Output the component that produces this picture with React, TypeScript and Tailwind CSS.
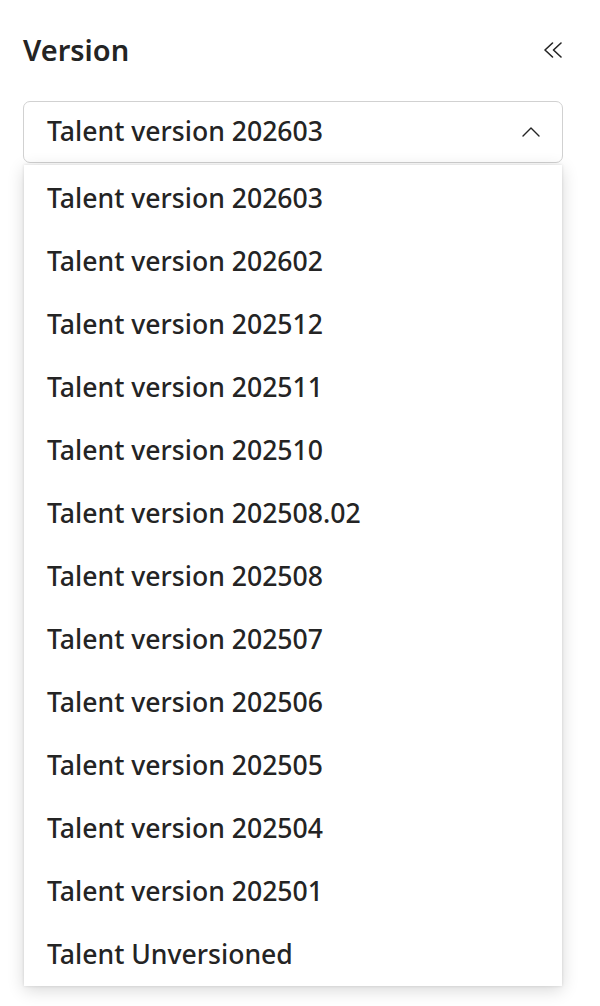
const versions = [
  "Talent version 202603",
  "Talent version 202602",
  "Talent version 202512",
  "Talent version 202511",
  "Talent version 202510",
  "Talent version 202508.02",
  "Talent version 202508",
  "Talent version 202507",
  "Talent version 202506",
  "Talent version 202505",
  "Talent version 202504",
  "Talent version 202501",
  "Talent Unversioned",
];

function DoubleChevronLeft() {
  return (
    <svg width="20" height="16" viewBox="0 0 20 16" fill="none" className="text-[#242424]">
      <path
        d="M9.5 1 L2 8 L9.5 15 M18 1 L10.5 8 L18 15"
        stroke="currentColor"
        strokeWidth="1.6"
        strokeLinecap="round"
        strokeLinejoin="round"
      />
    </svg>
  );
}

function ChevronUpIcon() {
  return (
    <svg width="18" height="10" viewBox="0 0 18 10" fill="none" className="text-[#242424]">
      <path
        d="M1 9 L9 1 L17 9"
        stroke="currentColor"
        strokeWidth="1.4"
        strokeLinecap="round"
        strokeLinejoin="round"
      />
    </svg>
  );
}

export default function App() {
  return (
    <div
      className="min-h-[1006px] w-[600px] bg-white text-[#242424]"
      style={{ fontFamily: '"Noto Sans", "Open Sans", sans-serif' }}
    >
      <div className="flex items-center justify-between pl-[23px] pr-[37px] pt-[28px]">
        <h2 className="text-[29px] font-semibold leading-[44px]">Version</h2>
        <DoubleChevronLeft />
      </div>

      <div className="relative ml-[23px] mr-[37px] mt-[29px]">
        <button
          type="button"
          className="flex h-[62px] w-full items-center justify-between rounded-[7px] border border-[#d1d1d1] bg-white pl-[23px] pr-[22px] text-left"
        >
          <span className="text-[26.6px] font-medium">{versions[0]}</span>
          <ChevronUpIcon />
        </button>

        <ul className="mx-px mt-[2px] bg-white pt-[2px] shadow-[0_4px_16px_rgba(0,0,0,0.16),0_0_3px_rgba(0,0,0,0.12)]">
          {versions.map((v) => (
            <li
              key={v}
              className="flex h-[63px] items-center px-[23px] text-[26.6px] font-medium"
            >
              {v}
            </li>
          ))}
        </ul>
      </div>
    </div>
  );
}
